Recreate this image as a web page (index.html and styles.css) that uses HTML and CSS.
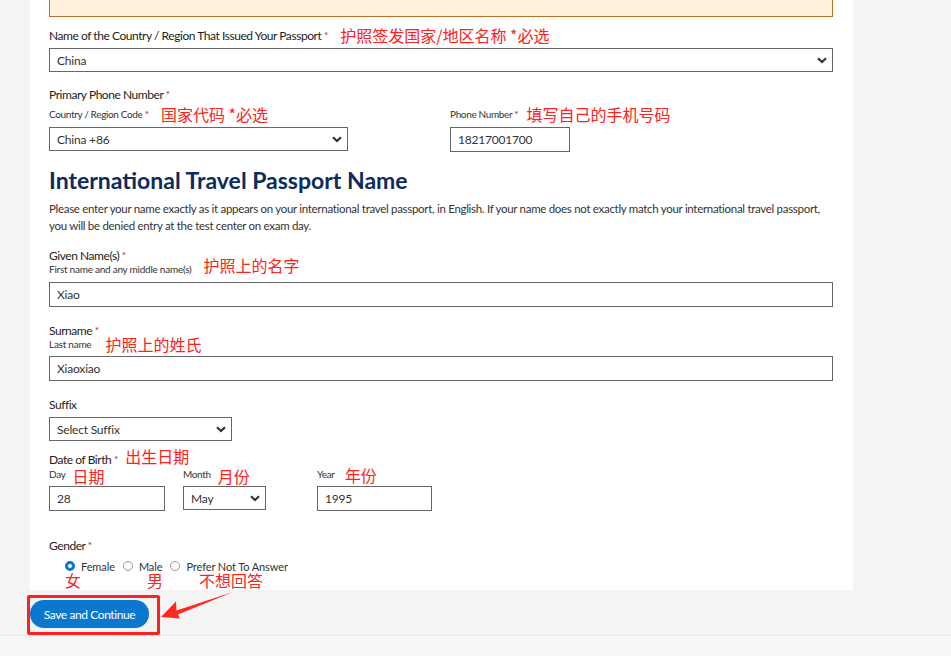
FILE: index.html
```html
<!DOCTYPE html>
<html lang="en">
<head>
    <meta charset="UTF-8">
    <title>Personal Information</title>
    <link rel="stylesheet" href="styles.css">
</head>
<body>
    <div class="card">
        <div class="alert"></div>

        <div class="field f-country">
            <div class="label">Name of the Country / Region That Issued Your Passport <span class="req">*</span><span class="note n-country">护照签发国家/地区名称 *必选</span></div>
            <div class="select wide"><span>China</span><svg width="10" height="7" viewBox="0 0 10 7"><path d="M1 1.2 L5 5 L9 1.2" fill="none" stroke="#333" stroke-width="2.2"/></svg></div>
        </div>

        <div class="field f-phone">
            <div class="label">Primary Phone Number <span class="req">*</span></div>
            <div class="phone-row">
                <div class="phone-col">
                    <div class="sublabel">Country / Region Code <span class="req">*</span><span class="note n-code">国家代码 *必选</span></div>
                    <div class="select code"><span>China +86</span><svg width="10" height="7" viewBox="0 0 10 7"><path d="M1 1.2 L5 5 L9 1.2" fill="none" stroke="#333" stroke-width="2.2"/></svg></div>
                </div>
                <div class="phone-col">
                    <div class="sublabel">Phone Number <span class="req">*</span><span class="note n-phone">填写自己的手机号码</span></div>
                    <input class="input phone" type="text" value="18217001700">
                </div>
            </div>
        </div>

        <h2 class="section-title">International Travel Passport Name</h2>
        <p class="intro">Please enter your name exactly as it appears on your international travel passport, in English. If your name does not exactly match your international travel passport, you will be denied entry at the test center on exam day.</p>

        <div class="field f-given">
            <div class="label">Given Name(s) <span class="req">*</span></div>
            <div class="hint">First name and any middle name(s)<span class="note n-given">护照上的名字</span></div>
            <input class="input wide" type="text" value="Xiao">
        </div>

        <div class="field f-surname">
            <div class="label">Surname <span class="req">*</span></div>
            <div class="hint">Last name<span class="note n-surname">护照上的姓氏</span></div>
            <input class="input wide" type="text" value="Xiaoxiao">
        </div>

        <div class="field f-suffix">
            <div class="label">Suffix</div>
            <div class="select suffix"><span>Select Suffix</span><svg width="10" height="7" viewBox="0 0 10 7"><path d="M1 1.2 L5 5 L9 1.2" fill="none" stroke="#333" stroke-width="2.2"/></svg></div>
        </div>

        <div class="field f-dob">
            <div class="label">Date of Birth <span class="req">*</span><span class="note n-dob">出生日期</span></div>
            <div class="dob-row">
                <div class="dob-col day">
                    <div class="sublabel">Day<span class="note n-part">日期</span></div>
                    <input class="input day-in" type="text" value="28">
                </div>
                <div class="dob-col month">
                    <div class="sublabel">Month<span class="note n-part">月份</span></div>
                    <div class="select month-sel"><span>May</span><svg width="10" height="7" viewBox="0 0 10 7"><path d="M1 1.2 L5 5 L9 1.2" fill="none" stroke="#333" stroke-width="2.2"/></svg></div>
                </div>
                <div class="dob-col year">
                    <div class="sublabel">Year<span class="note n-year">年份</span></div>
                    <input class="input year-in" type="text" value="1995">
                </div>
            </div>
        </div>

        <div class="field f-gender">
            <div class="label">Gender <span class="req">*</span></div>
            <div class="radios">
                <span class="radio checked"></span><span class="radio-label">Female</span>
                <span class="radio"></span><span class="radio-label">Male</span>
                <span class="radio"></span><span class="radio-label">Prefer Not To Answer</span>
            </div>
            <div class="radio-notes">
                <span class="cn n-female">女</span>
                <span class="cn n-male">男</span>
                <span class="cn n-none">不想回答</span>
            </div>
        </div>
    </div>

    <div class="actions">
        <button class="save-button">Save and Continue</button>
        <div class="mark-box"></div>
        <svg class="mark-arrow" width="90" height="36" viewBox="0 0 90 36">
            <polygon points="81,2 24.5,20.5 24,11.5 9,27 28,28.5 26,24.5" fill="#ff2a1f"/>
        </svg>
    </div>
    <div class="footer"></div>
</body>
</html>
```

FILE: styles.css
```css
        /* Page */
        body {
            margin: 0;
            font-family: 'Lato', 'Noto Sans CJK SC', sans-serif;
            color: #333;
            background-color: #f4f4f4;
            overflow: hidden;
        }

        .card {
            display: flow-root;
            margin-left: 30px;
            width: 784px;
            padding: 0 20px 0 19px;
            height: 590px;
            background-color: #fff;
        }

        .alert {
            margin-top: -30px;
            height: 45px;
            border: 1px solid #b8732a;
            background-color: #fff1dc;
        }

        /* Labels */
        .label, .sublabel, .hint {
            display: flex;
            align-items: center;
            white-space: pre;
        }
        .label {
            height: 16px;
            font-size: 12px;
            letter-spacing: -0.45px;
            color: #222;
        }
        .sublabel {
            height: 14px;
            font-size: 10px;
            letter-spacing: -0.35px;
            color: #333;
        }
        .hint {
            height: 12px;
            font-size: 10px;
            letter-spacing: -0.25px;
            color: #333;
        }
        .req {
            color: #a3132e;
            font-size: 10px;
            letter-spacing: 0;
        }
        .note, .cn {
            font-family: 'Noto Sans CJK SC', sans-serif;
            color: #ff2020;
            font-size: 16px;
            line-height: 16px;
            letter-spacing: 0;
        }
        .n-country { margin-left: 12px; }
        .n-code { margin-left: 12px; }
        .n-phone { margin-left: 8px; }
        .n-given { margin-left: 12px; position: relative; top: -4px; }
        .n-surname { margin-left: 14px; }
        .n-dob { margin-left: 7px; position: relative; top: -3px; }
        .n-part { margin-left: 7px; position: relative; top: 2px; }
        .n-year { margin-left: 10px; position: relative; top: 1px; }

        /* Inputs */
        .input {
            display: block;
            box-sizing: border-box;
            height: 25px;
            padding: 0 7px;
            border: 1px solid #666;
            font-family: 'Lato', sans-serif;
            font-size: 12px;
            letter-spacing: -0.2px;
            color: #333;
            background: #fff;
            outline: none;
        }
        .select {
            box-sizing: border-box;
            display: flex;
            justify-content: space-between;
            align-items: center;
            height: 24px;
            padding: 0 5px 0 7px;
            border: 1px solid #666;
            font-size: 12px;
            letter-spacing: -0.2px;
            color: #333;
            background: #fff;
        }
        .wide { width: 784px; }

        .f-country { margin-top: 10px; }
        .f-country .select { margin-top: 5px; }

        .f-phone { margin-top: 14px; }
        .phone-row {
            display: flex;
            margin-top: 5px;
        }
        .phone-col { display: flex; flex-direction: column; }
        .phone-col .sublabel { margin-bottom: 6px; }
        .code { width: 299px; margin-right: 102px; }
        .phone { width: 120px; height: 25px; }

        .section-title {
            margin: 14px 0 0;
            font-size: 23px;
            line-height: 28px;
            font-weight: 700;
            color: #0c2b5e;
        }
        .intro {
            margin: 6px 0 0;
            font-size: 11.5px;
            line-height: 17px;
            color: #333;
            letter-spacing: -0.3px;
        }

        .f-given { margin-top: 13px; }
        .f-given .input { margin-top: 7px; }
        .f-surname { margin-top: 15px; }
        .f-surname .input { margin-top: 6px; }

        .f-suffix { margin-top: 15px; }
        .suffix { width: 183px; margin-top: 5px; }

        .f-dob { margin-top: 10px; }
        .dob-row { display: flex; }
        .dob-col { display: flex; flex-direction: column; }
        .dob-col .sublabel { margin-bottom: 5px; }
        .day { width: 134px; }
        .month { width: 134px; }
        .day-in { width: 116px; }
        .month-sel { width: 83px; height: 24px; }
        .year-in { width: 115px; }

        .f-gender { margin-top: 26px; }
        .radios {
            display: flex;
            align-items: center;
            height: 14px;
            margin: 6px 0 0 16px;
            font-size: 11px;
            letter-spacing: -0.1px;
        }
        .radio {
            box-sizing: border-box;
            width: 10px;
            height: 10px;
            border: 1px solid #9a9a9a;
            border-radius: 50%;
            background: #fff;
            margin-right: 6px;
        }
        .radio.checked {
            border: 3.5px solid #0a78cf;
        }
        .radio-label { margin-right: 8px; }
        .radio-notes {
            display: flex;
            height: 16px;
            margin: -1px 0 0 16px;
        }
        .n-male { margin-left: 66px; }
        .n-none { margin-left: 36px; }

        /* Bottom */
        .actions {
            position: relative;
            height: 45px;
        }
        .save-button {
            margin: 10px 0 0 30px;
            width: 119px;
            height: 28px;
            border: none;
            border-radius: 14px;
            background-color: #0a78cf;
            color: #fff;
            font-family: 'Lato', sans-serif;
            font-size: 12px;
            letter-spacing: -0.4px;
        }
        .mark-box {
            position: absolute;
            left: 27px;
            top: 5px;
            width: 127px;
            height: 34px;
            border: 3px solid #ff2020;
            border-radius: 2px;
        }
        .mark-arrow {
            position: absolute;
            left: 152px;
            top: 0;
        }
        .footer {
            border-top: 1px solid #ebebeb;
            background-color: #f8f8f8;
            height: 40px;
        }
```
